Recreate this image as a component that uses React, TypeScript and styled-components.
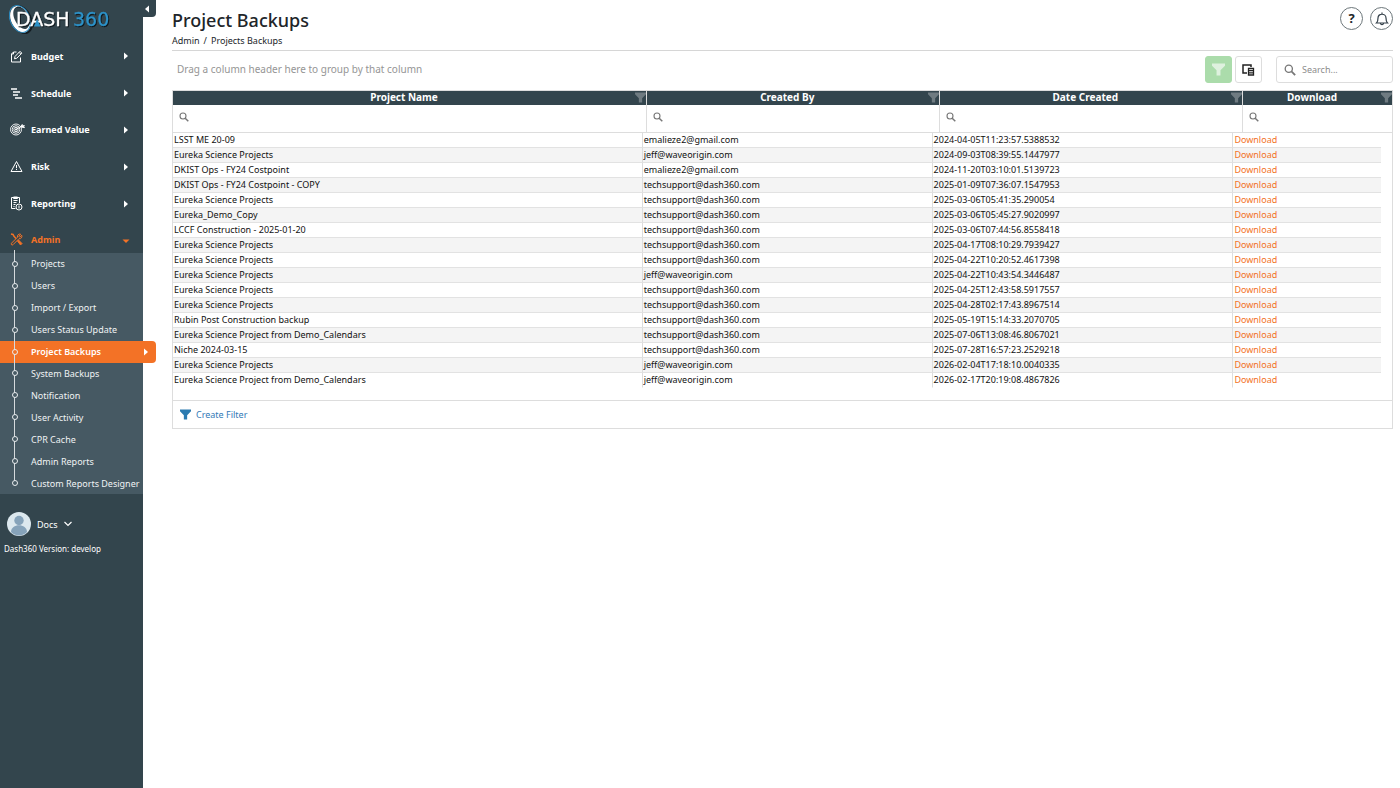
import React from "react";
import styled, { createGlobalStyle, css } from "styled-components";

const font = `"Noto Sans", "Open Sans", sans-serif`;
const slate = "#33454d";
const orange = "#f37226";
const line = "#dddddd";

const GlobalStyle = createGlobalStyle`
  *, *::before, *::after { box-sizing: border-box; }
  body { margin: 0; background: #fff; color: #212529; font: 9px/15px ${font}; }
  button, input { font: inherit; }
  button { cursor: pointer; padding: 0; border: 0; background: none; color: inherit; }
  ul { list-style: none; margin: 0; padding: 0; }
  a { text-decoration: none; color: inherit; }
`;

const Shell = styled.div`
  display: grid;
  grid-template-columns: 143px minmax(0, 1fr);
  min-height: 100vh;
`;
const Sidebar = styled.aside`
  position: relative;
  background: ${slate};
  color: #fff;
`;
const Collapse = styled.button`
  position: absolute;
  top: 0;
  left: 100%;
  width: 13px;
  height: 17px;
  display: flex;
  align-items: center;
  background: ${slate};
  border-radius: 0 0 4px 0;
`;
const Logo = styled.a`
  display: block;
  height: 38px;
  padding: 3px 0 0 8px;
  svg { display: block; }
`;
const Wordmark = styled.text`
  font-family: "DejaVu Sans", sans-serif;
  font-size: 19px;
  stroke-width: 0.3px;
  filter: drop-shadow(1px 1px 0 #10191e);
`;
const MainMenu = styled.ul`
  display: grid;
  grid-auto-rows: 1fr;
  height: 184px;
`;
const MenuButton = styled.button<{ $open?: boolean }>`
  display: grid;
  grid-template-columns: 21px 1fr 8px;
  align-items: center;
  width: 100%;
  height: ${(p) => (p.$open ? "31px" : "100%")};
  padding: ${(p) => (p.$open ? "4px" : "0")} 13px 0 10px;
  color: ${(p) => (p.$open ? orange : "#fff")};
  font-weight: 700;
  text-align: left;
  svg:last-child { justify-self: center; }
`;
const SubMenu = styled.ul`
  position: relative;
  display: grid;
  grid-auto-rows: 1fr;
  height: 241px;
  background: #465963;
  &::before {
    content: "";
    position: absolute;
    left: 14px;
    top: -3px;
    bottom: 11px;
    width: 1px;
    background: #d5dadd;
    z-index: 1;
  }
`;
const SubLink = styled.a<{ $active?: boolean }>`
  position: relative;
  display: flex;
  align-items: center;
  justify-content: space-between;
  height: 100%;
  padding-left: 31px;
  white-space: nowrap;
  color: #f0f3f4;
  &::before {
    content: "";
    position: absolute;
    left: 12px;
    width: 6px;
    height: 6px;
    border: 1px solid #e9edef;
    border-radius: 50%;
    background: ${(p) => (p.$active ? orange : "#465963")};
    z-index: 2;
  }
  ${(p) =>
    p.$active &&
    css`
      width: 156px;
      padding-right: 6px;
      background: ${orange};
      color: #fff;
      font-weight: 600;
      border-radius: 0 4px 4px 0;
    `}
`;
const UserButton = styled.button`
  display: flex;
  align-items: center;
  gap: 6px;
  margin: 18px 0 0 7px;
`;
const Version = styled.p`
  margin: 5px 0 0 4px;
  font-size: 8px;
`;
const Main = styled.main`
  min-width: 0;
  padding: 7px 7px 24px 29px;
`;
const PageHead = styled.header`
  display: flex;
  justify-content: space-between;
  align-items: flex-start;
  height: 44px;
  border-bottom: 1px solid #d6d6d6;
`;
const Title = styled.h1`
  margin: 0;
  font-size: 18px;
  line-height: 27px;
  font-weight: 500;
`;
const Crumbs = styled.nav`
  display: flex;
  gap: 4px;
  line-height: 13px;
`;
const HeadActions = styled.div`
  display: flex;
  gap: 7px;
`;
const RoundButton = styled.button`
  display: grid;
  place-items: center;
  width: 23px;
  height: 23px;
  border: 1px solid #6d777b;
  border-radius: 50%;
  font-size: 13px;
  font-weight: 700;
`;
const Toolbar = styled.div`
  display: flex;
  align-items: center;
  height: 39px;
  padding: 0 0 2px 5px;
`;
const GroupHint = styled.span`
  flex: 1;
  font-size: 10px;
  color: #959595;
`;
const ToolButton = styled.button<{ $on?: boolean }>`
  display: grid;
  place-items: center;
  width: 27px;
  height: 27px;
  margin-right: 3px;
  border: 1px solid ${(p) => (p.$on ? "#abdcab" : line)};
  border-radius: 3px;
  background: ${(p) => (p.$on ? "#abdcab" : "#fff")};
`;
const SearchBox = styled.label`
  display: flex;
  align-items: center;
  gap: 6px;
  width: 117px;
  height: 27px;
  margin-left: 11px;
  padding: 0 7px;
  border: 1px solid ${line};
  border-radius: 3px;
`;
const Input = styled.input`
  flex: 1;
  min-width: 0;
  width: 100%;
  border: 0;
  padding: 0;
  outline: 0;
  background: none;
  color: #333;
  &::placeholder { color: #8c8c8c; opacity: 1; }
`;
const Grid = styled.section`
  border: 1px solid ${line};
`;
const DataTable = styled.table`
  width: 100%;
  table-layout: fixed;
  border-collapse: separate;
  border-spacing: 0;
`;
const HeadCell = styled.th`
  height: 14px;
  padding: 0;
  background: ${slate};
  color: #fff;
  font-size: 10px;
  line-height: 13px;
  font-weight: 700;
  & + & { border-left: 1px solid ${line}; }
`;
const HeadInner = styled.div`
  display: grid;
  grid-template-columns: 1fr 11px;
  text-align: center;
  height: 14px;
  svg { margin-top: 1px; }
`;
const FilterCell = styled.td`
  height: 28px;
  padding: 0 0 3px;
  border-bottom: 1px solid ${line};
  & + & { border-left: 1px solid ${line}; }
`;
const FilterLabel = styled.label`
  display: flex;
  align-items: center;
  gap: 8px;
  padding: 0 6px;
`;
const BodyArea = styled.div`
  padding: 0 11px 12px 0;
`;
const BodyCell = styled.td`
  height: 15px;
  padding: 0 0 0 1px;
  border-bottom: 1px solid #e2e2e2;
  line-height: 14px;
  white-space: nowrap;
  color: #111;
  & + & { border-left: 1px solid ${line}; }
  tr:nth-child(even) & { background: #f4f4f4; }
  tr:last-child & { border-bottom-color: transparent; background: #fff; }
`;
const Download = styled.a`
  color: ${orange};
`;
const FilterPanel = styled.footer`
  display: flex;
  align-items: center;
  height: 28px;
  padding-left: 7px;
  border-top: 1px solid ${line};
`;
const CreateFilter = styled.button`
  display: flex;
  align-items: center;
  gap: 5px;
  color: #337ab7;
`;

const Funnel = ({ size = 11, color = "#6f7b81" }: { size?: number; color?: string }) => (
  <svg width={size} height={size} viewBox="0 0 12 12" fill={color}>
    <path d="M0 .5h12v2L7.8 6.8V11.500H4.200V6.800L0 2.500z" />
  </svg>
);
const Magnifier = ({ size = 10 }: { size?: number }) => (
  <svg width={size} height={size} viewBox="0 0 10 10" fill="none" stroke="#777">
    <circle cx="4" cy="4" r="3" strokeWidth="1.1" />
    <path d="M6.200 6.200 9.300 9.300" strokeWidth="1.5" />
  </svg>
);
const carets = {
  right: "M2 .5 6 4 2 7.500z",
  left: "M6 .5 2 4l4 3.500z",
  down: "M.5 3.500h7L4 7z",
};
const Caret = ({ dir = "right" }: { dir?: keyof typeof carets }) => (
  <svg width="8" height="8" viewBox="0 0 8 8" fill="currentColor">
    <path d={carets[dir]} />
  </svg>
);

const BrandMark = () => (
  <svg width="106" height="33" viewBox="0 0 106 33" role="img" aria-label="DASH360">
    <g transform="rotate(-24 13 16)">
      <ellipse cx="13.500" cy="17" rx="9" ry="14" fill="none" stroke="#141d22" strokeWidth="2" />
      <path fillRule="evenodd" fill="#fff" d="M12.500 2c5.500 0 9 6 9 13.500S18 30 12.500 30 3 23.500 3 16 7 2 12.500 2zm1.500 1.200C9.500 3.200 7 8.500 7 14.500S10 27 14 27s6.800-5 6.800-11.500S18 3.200 14 3.200z" />
      <ellipse cx="12" cy="15.500" rx="9.800" ry="14" fill="none" stroke="#2b8fc7" strokeWidth=".9" />
    </g>
    <Wordmark x="8" y="23" fill="#fff" stroke="#fff">DASH</Wordmark>
    <Wordmark x="65" y="23" fill="#2d93ca" stroke="#2d93ca">360</Wordmark>
    <path d="M26 23.500 29.200 16l3.200 7.500z" fill="#2d93ca" />
  </svg>
);

const icons: Record<string, React.ReactNode> = {
  Budget: (
    <svg width="13" height="13" viewBox="0 0 13 13" fill="none" stroke="currentColor">
      <path d="M6.500 2H3.500L1.500 4v8h9V7.500M3.500 2v2h-2" />
      <path d="m4.500 8.800.5-2.300L10 1.300l1.800 1.800L6.700 8.300zM9 2.300l1.800 1.800" />
    </svg>
  ),
  Schedule: (
    <svg width="13" height="13" viewBox="0 0 13 13" stroke="currentColor" strokeWidth="1.300">
      <path d="M1 2h6M3 5h7M3 8h5M5 11h7" />
    </svg>
  ),
  "Earned Value": (
    <svg width="15" height="13" viewBox="0 0 15 13" fill="none" stroke="currentColor" strokeWidth=".9">
      <circle cx="6" cy="6.500" r="5.500" />
      <circle cx="6" cy="6.500" r="3.800" />
      <circle cx="6" cy="6.500" r="2.200" />
      <circle cx="6" cy="6.500" r=".7" fill="currentColor" />
      <path d="m6 6.500 5-3" strokeWidth="1" />
      <path d="m10.500 4 1.700-2.500.6 1.200 1.700.1-.9.9.9.9z" fill="currentColor" />
    </svg>
  ),
  Risk: (
    <svg width="13" height="13" viewBox="0 0 13 13" fill="none" stroke="currentColor">
      <path d="M6.500 1.500 12 11.500H1zM6.500 5v3.200M6.500 9v1" />
    </svg>
  ),
  Reporting: (
    <svg width="13" height="15" viewBox="0 0 13 15" fill="none" stroke="currentColor">
      <path d="M5.500 12.500h-4v-11h8V7M3.500 4.500h4M3.500 6.500h3M3.500 8.500h2M3.500 10.500h1" />
      <path d="M3.500 1h4v1.500h-4z" />
      <circle cx="9" cy="11" r="3" />
      <path d="M9 9.500v3" />
    </svg>
  ),
  Admin: (
    <svg width="13" height="13" viewBox="0 0 13 13" fill="none" stroke="currentColor">
      <path d="m1 1 2 .5 1 1.800L6 5.500" strokeWidth="1.500" />
      <path d="m7.500 8 1-1 3.500 3.500-1.500 1.500z" fill="currentColor" />
      <path d="M11.700 2.200 9.700 4.200l-1-1 2-2c-2-.7-3.800 1-3.200 3L1.500 10.200c-1 1 .5 2.500 1.500 1.500L9 5.700c2 .5 3.500-1.500 2.700-3.500z" />
    </svg>
  ),
};

const menu = ["Budget", "Schedule", "Earned Value", "Risk", "Reporting"];
const adminPages = [
  "Projects", "Users", "Import / Export", "Users Status Update", "Project Backups", "System Backups",
  "Notification", "User Activity", "CPR Cache", "Admin Reports", "Custom Reports Designer",
];
const support = "techsupport@dash360.com";
const jeff = "jeff@waveorigin.com";
const emalie = "emalieze2@gmail.com";
const rows = [
  ["LSST ME 20-09", emalie, "2024-04-05T11:23:57.5388532"],
  ["Eureka Science Projects", jeff, "2024-09-03T08:39:55.1447977"],
  ["DKIST Ops - FY24 Costpoint", emalie, "2024-11-20T03:10:01.5139723"],
  ["DKIST Ops - FY24 Costpoint - COPY", support, "2025-01-09T07:36:07.1547953"],
  ["Eureka Science Projects", support, "2025-03-06T05:41:35.290054"],
  ["Eureka_Demo_Copy", support, "2025-03-06T05:45:27.9020997"],
  ["LCCF Construction - 2025-01-20", support, "2025-03-06T07:44:56.8558418"],
  ["Eureka Science Projects", support, "2025-04-17T08:10:29.7939427"],
  ["Eureka Science Projects", support, "2025-04-22T10:20:52.4617398"],
  ["Eureka Science Projects", jeff, "2025-04-22T10:43:54.3446487"],
  ["Eureka Science Projects", support, "2025-04-25T12:43:58.5917557"],
  ["Eureka Science Projects", support, "2025-04-28T02:17:43.8967514"],
  ["Rubin Post Construction backup", support, "2025-05-19T15:14:33.2070705"],
  ["Eureka Science Project from Demo_Calendars", support, "2025-07-06T13:08:46.8067021"],
  ["Niche 2024-03-15", support, "2025-07-28T16:57:23.2529218"],
  ["Eureka Science Projects", jeff, "2026-02-04T17:18:10.0040335"],
  ["Eureka Science Project from Demo_Calendars", jeff, "2026-02-17T20:19:08.4867826"],
];
const columns = ["Project Name", "Created By", "Date Created", "Download"];

const Col = styled.col<{ $share: number }>`
  width: ${(p) => p.$share}%;
`;
const Columns = () => (
  <colgroup>
    <Col $share={38.8} />
    <Col $share={24} />
    <Col $share={24.9} />
    <Col $share={12.3} />
  </colgroup>
);

export default function App() {
  return (
    <Shell>
      <GlobalStyle />
      <Sidebar>
        <Logo href="#"><BrandMark /></Logo>
        <Collapse aria-label="Collapse menu"><Caret dir="left" /></Collapse>
        <nav>
          <MainMenu>
            {menu.map((name) => (
              <li key={name}>
                <MenuButton>{icons[name]}<span>{name}</span><Caret /></MenuButton>
              </li>
            ))}
          </MainMenu>
          <MenuButton $open aria-expanded="true">{icons.Admin}<span>Admin</span><Caret dir="down" /></MenuButton>
          <SubMenu>
            {adminPages.map((name) => (
              <li key={name}>
                <SubLink href="#" $active={name === "Project Backups"}>
                  {name}
                  {name === "Project Backups" && <Caret />}
                </SubLink>
              </li>
            ))}
          </SubMenu>
        </nav>
        <UserButton>
          <svg width="24" height="24" viewBox="0 0 24 24">
            <circle cx="12" cy="12" r="12" fill="#dce8ee" />
            <circle cx="12" cy="8.500" r="4.700" fill="#86a3ba" />
            <path d="M4 20c0-9 16-9 16 0-4 4.500-12 4.500-16 0z" fill="#86a3ba" />
          </svg>
          <span>Docs</span>
          <svg width="8" height="6" viewBox="0 0 8 6" fill="none" stroke="currentColor" strokeWidth="1.200">
            <path d="m.5 1 3.500 3.500L7.500 1" />
          </svg>
        </UserButton>
        <Version>Dash360 Version: develop</Version>
      </Sidebar>
      <Main>
        <PageHead>
          <div>
            <Title>Project Backups</Title>
            <Crumbs aria-label="Breadcrumb"><a href="#">Admin</a><span>/</span><span>Projects Backups</span></Crumbs>
          </div>
          <HeadActions>
            <RoundButton aria-label="Help">?</RoundButton>
            <RoundButton aria-label="Notifications">
              <svg width="14" height="14" viewBox="0 0 14 14" fill="none" stroke="#333f48" strokeWidth="1.200">
                <path d="M1.500 11h11c-1.500-1.500-1.500-3-1.500-5 0-5-8-5-8 0 0 2 0 3.500-1.500 5zM5.500 11.500c.3 1.500 2.700 1.500 3 0M7 .5v1.500" />
              </svg>
            </RoundButton>
          </HeadActions>
        </PageHead>
        <Toolbar>
          <GroupHint>Drag a column header here to group by that column</GroupHint>
          <ToolButton $on aria-label="Apply filter"><Funnel size={13} color="#dff1df" /></ToolButton>
          <ToolButton aria-label="Column chooser">
            <svg width="13" height="12" viewBox="0 0 13 12" fill="none" stroke="#222" strokeWidth="1.500">
              <path d="M5 9H1V1h8v2" />
              <path d="M6.500 4.500h5v6.500h-5zM7 6.700h4M7 8.800h4" strokeWidth="1.300" />
            </svg>
          </ToolButton>
          <SearchBox><Magnifier size={12} /><Input aria-label="Search in the grid" placeholder="Search..." /></SearchBox>
        </Toolbar>
        <Grid>
          <DataTable>
            <Columns />
            <thead>
              <tr>
                {columns.map((name) => (
                  <HeadCell key={name} scope="col"><HeadInner>{name}<Funnel /></HeadInner></HeadCell>
                ))}
              </tr>
            </thead>
            <tbody>
              <tr>
                {columns.map((name) => (
                  <FilterCell key={name}>
                    <FilterLabel><Magnifier /><Input aria-label={`Filter ${name}`} /></FilterLabel>
                  </FilterCell>
                ))}
              </tr>
            </tbody>
          </DataTable>
          <BodyArea>
            <DataTable>
              <Columns />
              <tbody>
                {rows.map((row) => (
                  <tr key={row[2]}>
                    {row.map((cell, i) => <BodyCell key={i}>{cell}</BodyCell>)}
                    <BodyCell><Download href="#">Download</Download></BodyCell>
                  </tr>
                ))}
              </tbody>
            </DataTable>
          </BodyArea>
          <FilterPanel>
            <CreateFilter><Funnel color="#2a7ab0" />Create Filter</CreateFilter>
          </FilterPanel>
        </Grid>
      </Main>
    </Shell>
  );
}
